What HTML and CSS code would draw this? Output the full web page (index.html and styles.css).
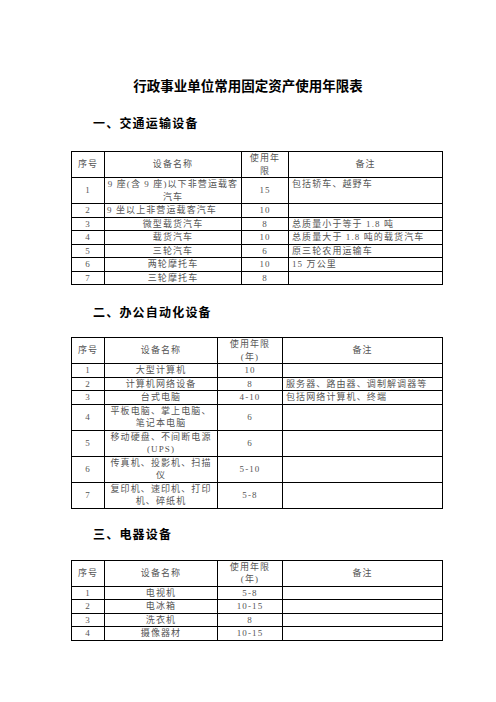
FILE: index.html
```html
<!DOCTYPE html>
<html lang="zh-CN">
<head>
<meta charset="utf-8">
<title>行政事业单位常用固定资产使用年限表</title>
<link rel="stylesheet" href="styles.css">
</head>
<body>
<div class="page">
  <h1 class="title">行政事业单位常用固定资产使用年限表</h1>

  <h2 class="section s1">一、交通运输设备</h2>
  <table class="grid">
    <colgroup><col class="c-no"><col class="c-name1"><col class="c-yr1"><col class="c-note1"></colgroup>
    <tr class="head"><td>序号</td><td>设备名称</td><td>使用年<br>限</td><td class="center">备注</td></tr>
    <tr class="tall"><td>1</td><td class="top">9 座(含 9 座)以下非营运载客<br>汽车</td><td>15</td><td class="note top">包括轿车、越野车</td></tr>
    <tr><td>2</td><td class="left">9 坐以上非营运载客汽车</td><td>10</td><td class="note"></td></tr>
    <tr><td>3</td><td>微型载货汽车</td><td>8</td><td class="note">总质量小于等于 1.8 吨</td></tr>
    <tr><td>4</td><td>载货汽车</td><td>10</td><td class="note">总质量大于 1.8 吨的载货汽车</td></tr>
    <tr><td>5</td><td>三轮汽车</td><td>6</td><td class="note">原三轮农用运输车</td></tr>
    <tr><td>6</td><td>两轮摩托车</td><td>10</td><td class="note">15 万公里</td></tr>
    <tr><td>7</td><td>三轮摩托车</td><td>8</td><td class="note"></td></tr>
  </table>

  <h2 class="section s2">二、办公自动化设备</h2>
  <table class="grid">
    <colgroup><col class="c-no"><col class="c-name2"><col class="c-yr2"><col class="c-note2"></colgroup>
    <tr class="head"><td>序号</td><td>设备名称</td><td>使用年限<br>(年)</td><td class="center">备注</td></tr>
    <tr><td>1</td><td>大型计算机</td><td>10</td><td class="note"></td></tr>
    <tr><td>2</td><td>计算机网络设备</td><td>8</td><td class="note">服务器、路由器、调制解调器等</td></tr>
    <tr><td>3</td><td>台式电脑</td><td>4-10</td><td class="note">包括网络计算机、终端</td></tr>
    <tr class="tall"><td>4</td><td>平板电脑、掌上电脑、<br>笔记本电脑</td><td>6</td><td class="note"></td></tr>
    <tr class="tall"><td>5</td><td>移动硬盘、不间断电源<br>(UPS)</td><td>6</td><td class="note"></td></tr>
    <tr class="tall"><td>6</td><td>传真机、投影机、扫描<br>仪</td><td>5-10</td><td class="note"></td></tr>
    <tr class="tall"><td>7</td><td>复印机、速印机、打印<br>机、碎纸机</td><td>5-8</td><td class="note"></td></tr>
  </table>

  <h2 class="section s3">三、电器设备</h2>
  <table class="grid">
    <colgroup><col class="c-no"><col class="c-name2"><col class="c-yr2"><col class="c-note2"></colgroup>
    <tr class="head"><td>序号</td><td>设备名称</td><td>使用年限<br>(年)</td><td class="center">备注</td></tr>
    <tr><td>1</td><td>电视机</td><td>5-8</td><td class="note"></td></tr>
    <tr><td>2</td><td>电冰箱</td><td>10-15</td><td class="note"></td></tr>
    <tr><td>3</td><td>洗衣机</td><td>8</td><td class="note"></td></tr>
    <tr><td>4</td><td>摄像器材</td><td>10-15</td><td class="note"></td></tr>
  </table>
</div>
</body>
</html>
```

FILE: styles.css
```css
html, body {
  margin: 0;
  padding: 0;
  background: #ffffff;
}

.page {
  width: 496px;
  padding-top: 75px;
  font-family: "Liberation Serif", "Noto Sans CJK SC", serif;
  color: #000;
}

.title {
  margin: 0;
  text-align: center;
  font-family: "Noto Sans CJK SC", sans-serif;
  font-weight: 700;
  font-size: 13.5px;
  line-height: 20px;
}

.section {
  margin: 0 0 0 93px;
  font-family: "Noto Sans CJK SC", sans-serif;
  font-weight: 700;
  font-size: 12px;
  letter-spacing: 1.2px;
  line-height: 20px;
}

.s1 { margin-top: 18px; margin-bottom: 18px; }
.s2 { margin-top: 17px; margin-bottom: 15px; }
.s3 { margin-top: 15px; margin-bottom: 16px; }

.grid {
  margin-left: 71px;
  width: 371px;
  table-layout: fixed;
  border-collapse: collapse;
  font-size: 9px;
  letter-spacing: 1.1px;
  color: #555555;
}

.c-no { width: 33px; }
.c-name1 { width: 137px; }
.c-yr1 { width: 47px; }
.c-note1 { width: 154px; }
.c-name2 { width: 113px; }
.c-yr2 { width: 65px; }
.c-note2 { width: 160px; }

.grid td {
  border: 1px solid #000;
  padding: 0 1px;
  height: 12px;
  line-height: 12.5px;
  text-align: center;
  vertical-align: middle;
  white-space: nowrap;
  overflow: hidden;
}

.grid .head td {
  height: 24px;
}

.grid .tall td {
  height: 25px;
}

.grid td.note {
  text-align: left;
  padding-left: 3px;
}

.grid td.center {
  text-align: center;
}

.grid td.top {
  vertical-align: top;
}

.grid td.left {
  text-align: left;
  padding-left: 2px;
}
```
